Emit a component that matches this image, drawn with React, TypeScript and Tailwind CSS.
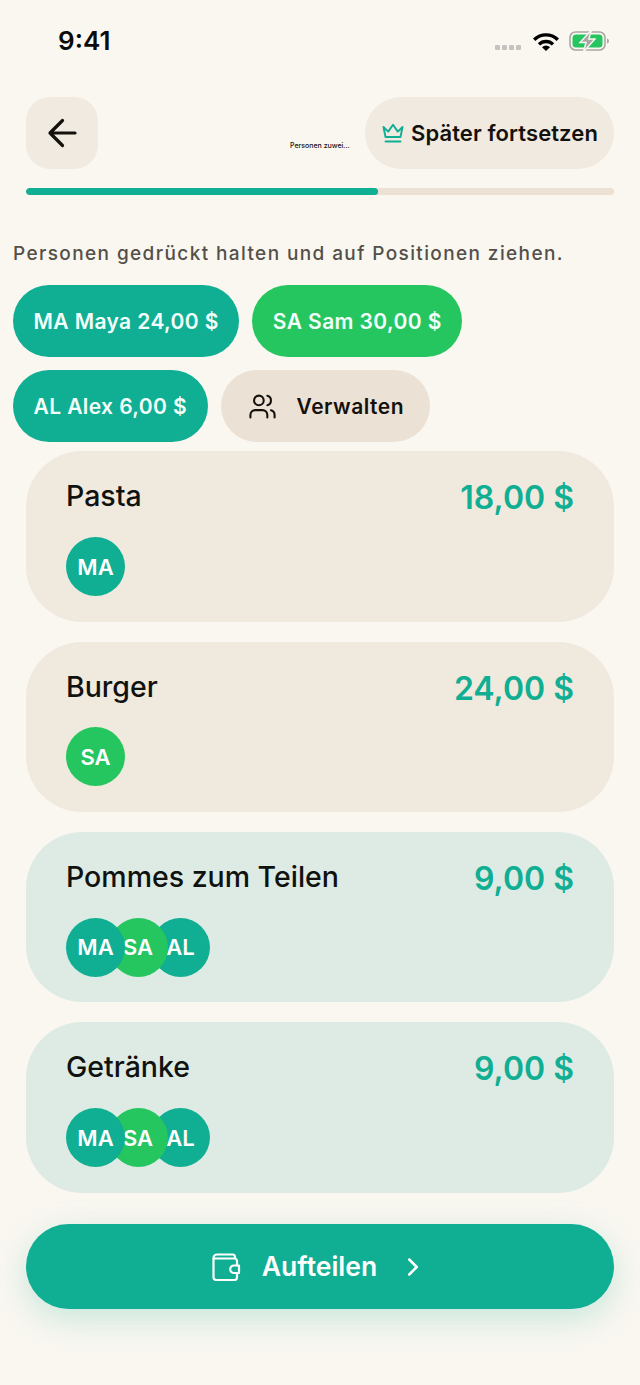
import { ChevronRight, Users } from "lucide-react";

const TEAL = "bg-[#10ae93]";
const GREEN = "bg-[#25c55f]";
const STACK = ["z-20", "z-10", "z-0"];

const items = [
  { name: "Pasta", price: "18,00 $", shared: false, people: ["MA"] },
  { name: "Burger", price: "24,00 $", shared: false, people: ["SA"] },
  { name: "Pommes zum Teilen", price: "9,00 $", shared: true, people: ["MA", "SA", "AL"] },
  { name: "Getränke", price: "9,00 $", shared: true, people: ["MA", "SA", "AL"] },
];

function StatusBar() {
  return (
    <div className="flex h-[81px] items-center justify-between pl-[58px] pr-[30px]">
      <span className="text-[26px] font-semibold leading-none text-[#0b0b0b]">9:41</span>
      <div className="flex items-center">
        <div className="mr-[11px] mt-[13px] flex gap-[2px]">
          <span className="h-[5px] w-[5px] rounded-[1px] bg-[#c4c3c0]" />
          <span className="h-[5px] w-[5px] rounded-[1px] bg-[#c4c3c0]" />
          <span className="h-[5px] w-[5px] rounded-[1px] bg-[#c4c3c0]" />
          <span className="h-[5px] w-[5px] rounded-[1px] bg-[#c4c3c0]" />
        </div>
        <svg width="28" height="20" viewBox="0 0 28 20" className="mr-[9px]">
          <path d="M1 7.5a18.5 18.5 0 0 1 26 0l-2.4 2.5a15 15 0 0 0-21.2 0z" fill="#000" />
          <path d="M5.8 12.2a11.6 11.6 0 0 1 16.4 0l-2.4 2.4a8.2 8.2 0 0 0-11.6 0z" fill="#000" />
          <path d="M10 16.2a5.6 5.6 0 0 1 8 0L14 20z" fill="#000" />
        </svg>
        <svg width="41" height="24" viewBox="0 0 41 24">
          <rect x="1" y="3" width="35" height="18" rx="5.5" fill="none" stroke="#a9a8a4" strokeWidth="1.6" />
          <rect x="3.5" y="5.5" width="30" height="13" rx="3.5" fill="#25c55f" />
          <path d="M38 9.5c1.4.4 2 1.3 2 2.5s-.6 2.1-2 2.5z" fill="#a9a8a4" />
          <path d="M22.5 1 11 13.5h6l-2.6 9.5L26 10h-6.2z" fill="#a9a8a4" stroke="#faf7f1" strokeWidth="1.4" />
        </svg>
      </div>
    </div>
  );
}

function Header() {
  return (
    <div className="px-[26px]">
      <div className="mt-[16px] flex h-[72px] items-center">
        <button className="flex h-[72px] w-[72px] items-center justify-center rounded-[24px] bg-[#f0eae0]">
          <svg width="32" height="32" viewBox="0 0 32 32" fill="none" stroke="#14110d" strokeWidth="3.2" strokeLinecap="round" strokeLinejoin="round">
            <path d="M29 16H4M16.5 3.5 4 16l12.5 12.5" />
          </svg>
        </button>
        <span className="ml-[192px] mt-[26px] w-[62px] truncate text-[7px] font-medium text-[#14110d]">Personen zuwei...</span>
        <button className="ml-auto flex h-[72px] w-[249px] items-center rounded-full bg-[#f0eae0] pl-[17px]">
          <svg width="22" height="21" viewBox="0 0 22 21" fill="none" stroke="#10ae93" strokeWidth="1.9" strokeLinejoin="round" className="mr-[7px]">
            <path d="M1.5 4 6.2 8.6 11 1.8l4.8 6.8L20.5 4l-2 10h-15z" />
            <path d="M3.5 18.5h15" strokeLinecap="round" />
          </svg>
          <span className="text-[22px] font-semibold leading-none tracking-[0.1px] text-[#14110d]">Später fortsetzen</span>
        </button>
      </div>
      <div className="mt-[19px] h-[7px] overflow-hidden rounded-full bg-[#ece1d5]">
        <div className="h-full w-[352px] rounded-full bg-[#10ae93]" />
      </div>
    </div>
  );
}

function PersonChip({ label, color }: { label: string; color: string }) {
  return (
    <div className={`flex h-[72px] items-center rounded-full px-[20.5px] pt-[1px] text-[21px] font-semibold tracking-[0.4px] text-[#f2fffb] ${color}`}>
      {label}
    </div>
  );
}

function Avatars({ people }: { people: string[] }) {
  return (
    <div className="mt-[18.7px] flex">
      {people.map((p, i) => (
        <div
          key={p}
          className={`relative flex h-[59px] w-[59px] items-center justify-center rounded-full text-[22px] font-semibold leading-none text-white ${i > 0 ? "-ml-[16.5px]" : ""} ${p === "SA" ? GREEN : TEAL} ${STACK[i]}`}
        >
          {p}
        </div>
      ))}
    </div>
  );
}

export default function App() {
  return (
    <div className="h-[1385px] w-[640px] overflow-hidden bg-[#faf7f1] font-['Inter',sans-serif]">
      <StatusBar />
      <Header />

      <p className="ml-[13px] mt-[48px] whitespace-nowrap text-[19px] font-medium leading-[22px] tracking-[1.39px] text-[#544f49]">
        Personen gedrückt halten und auf Positionen ziehen.
      </p>

      <div className="ml-[13px] mt-[20px] flex w-[600px] flex-wrap gap-[13px]">
        <PersonChip label="MA Maya 24,00 $" color={TEAL} />
        <PersonChip label="SA Sam 30,00 $" color={GREEN} />
        <PersonChip label="AL Alex 6,00 $" color={TEAL} />
        <div className="flex h-[72px] w-[209px] items-center rounded-full bg-[#ece1d5] pl-[27px]">
          <Users size={29} strokeWidth={1.7} className="text-[#14110d]" />
          <span className="ml-[20px] pt-[1px] text-[21px] font-semibold tracking-[0.5px] text-[#14110d]">Verwalten</span>
        </div>
      </div>

      <div className="mx-[26px] mt-[9.4px] flex flex-col gap-[20px]">
        {items.map((item) => (
          <div
            key={item.name}
            className={`h-[170.33px] rounded-[56px] px-[40px] pt-[27px] ${item.shared ? "bg-[#deebe4]" : "bg-[#f0e9de]"}`}
          >
            <div className="flex items-start justify-between">
              <span className="text-[28.5px] font-medium leading-[36px] text-[#10120f]">{item.name}</span>
              <span className="text-[32px] font-semibold leading-[40px] text-[#10ae93]">{item.price}</span>
            </div>
            <Avatars people={item.people} />
          </div>
        ))}
      </div>

      <button className="mx-[26px] mt-[31.3px] flex h-[85px] w-[588px] items-center justify-center rounded-full bg-[#10ae93] text-white shadow-[0_10px_34px_rgba(16,174,147,0.22)]">
        <svg width="29" height="28" viewBox="0 0 29 28" fill="none" stroke="currentColor" strokeWidth="2.2" strokeLinecap="round" strokeLinejoin="round">
          <path d="M25 12.5V8a2.5 2.5 0 0 0-2.5-2.5H2M25 20v4.5a2.5 2.5 0 0 1-2.5 2.5H4.5A3 3 0 0 1 1.5 24V5A3.5 3.5 0 0 1 5 1.5h15.5A2.5 2.5 0 0 1 23 4v1.5" />
          <path d="M22 12.5h5v7.5h-5a3.75 3.75 0 0 1 0-7.5z" />
        </svg>
        <span className="ml-[21px] text-[26.5px] font-semibold leading-none">Aufteilen</span>
        <ChevronRight size={30} strokeWidth={2} className="ml-[21px]" />
      </button>
    </div>
  );
}
